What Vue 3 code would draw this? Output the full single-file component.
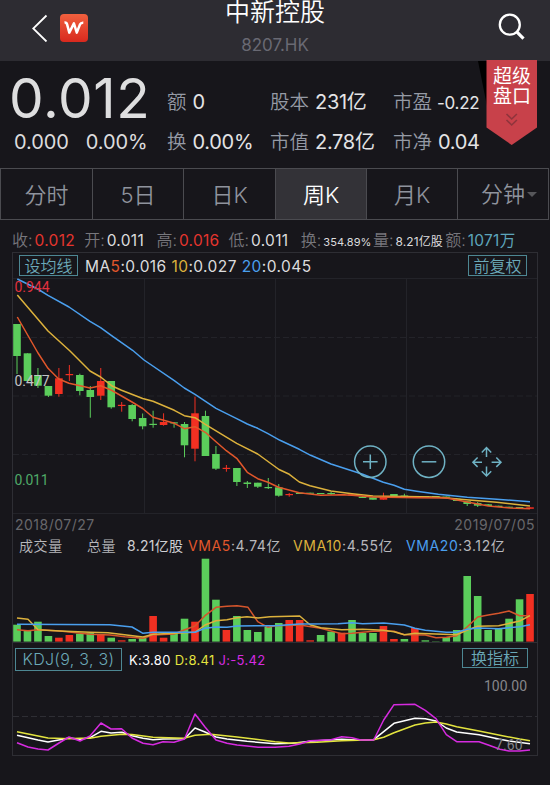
<!-- StockDetail.vue -->
<template>
  <div class="page">
    <header class="header">
      <div class="header-left">
        <svg class="back" viewBox="0 0 16 28" width="16" height="28">
          <path d="M14.5 1.5 L1.2 14.5 L14.5 27.5" fill="none" stroke="#fff" stroke-width="1.8" />
        </svg>
        <div class="logo">
          <svg viewBox="0 0 28 28" width="28" height="28">
            <path d="M4.5 8.6 Q6.6 8.4 7.1 10.4 L9.3 18.6 L13.9 9.4 L16.8 18.6 L19.9 10.6 Q20.8 8.5 23.3 8.7"
              fill="none" stroke="#fff" stroke-width="2.5" stroke-linejoin="round" />
          </svg>
        </div>
      </div>
      <div class="title">
        <h1>中新控股</h1>
        <p>8207.HK</p>
      </div>
      <svg class="search" viewBox="0 0 28 28" width="28" height="28">
        <circle cx="11.8" cy="11.7" r="10" fill="none" stroke="#fff" stroke-width="2.3" />
        <path d="M18.8 18.9 L25.5 25.6" stroke="#fff" stroke-width="3.2" />
      </svg>
    </header>

    <section class="quote">
      <div class="price">
        <div class="price-now">0.012</div>
        <div class="price-change"><span>0.000</span><span>0.00%</span></div>
      </div>
      <dl class="stats">
        <div v-for="s in stats" :key="s.label" class="stat">
          <dt>{{ s.label }}</dt>
          <dd :class="{ small: s.small }">{{ s.value }}</dd>
        </div>
      </dl>
      <div class="ribbon">
        <svg class="ribbon-bg" viewBox="0 0 60 86" width="60" height="86">
          <path d="M0 1 H9 V46 Z" fill="#000" />
          <path d="M8.5 0 H59 V67.5 L33.7 85 L8.5 67.5 Z" fill="#c8414a" />
          <path d="M28.5 54 L33.7 59 L38.9 54 M28.5 60 L33.7 65 L38.9 60" fill="none" stroke="#8f343c" stroke-width="1.6" />
        </svg>
        <span class="ribbon-text">超级<br />盘口</span>
      </div>
    </section>

    <nav class="tabs">
      <a v-for="t in tabs" :key="t" class="tab" :class="{ active: t === '周K', more: t === '分钟' }">{{ t }}</a>
    </nav>

    <div class="info">
      <div v-for="i in info" :key="i.label" class="info-item">
        <span class="info-label">{{ i.label }}:</span>
        <span :class="i.type">{{ i.value }}</span>
      </div>
    </div>

    <main class="chart">
      <div class="ma-row">
        <button class="btn">设均线</button>
        <span class="ma">MA<i class="c5">5</i>:0.016 <i class="c10">10</i>:0.027 <i class="c20">20</i>:0.045</span>
        <button class="btn btn-right">前复权</button>
      </div>

      <svg class="pane" viewBox="13 278 524 236" width="524" height="236">
        <g stroke="#232329">
          <path d="M13 278.5 H537 M13 513.5 H537 M144.5 278 V513 M275.5 278 V513 M406.5 278 V513" />
          <path d="M13 337.5 H537 M13 396 H537 M13 454.5 H537" stroke-dasharray="6 3" />
        </g>
        <g v-for="(c, i) in candles" :key="i" :fill="c[0] ? up : down">
          <rect :x="cx(i) - 0.5" :y="c[3]" width="1" :height="c[4] - c[3]" />
          <rect :x="cx(i) - 3.8" :y="c[1]" width="7.6" :height="c[2] - c[1]" />
        </g>
        <g class="lines">
          <polyline :points="ma.ma20" stroke="#4a9fee" />
          <polyline :points="ma.ma10" stroke="#dcb13c" />
          <polyline :points="ma.ma5" stroke="#e2572b" />
        </g>
        <g class="axis">
          <text x="14.5" y="292" fill="#e0313f" textLength="35">0.944</text>
          <text x="14.5" y="385.5" fill="#c4c4c6" textLength="35">0.477</text>
          <text x="14.5" y="484.5" fill="#4fa968" textLength="34">0.011</text>
        </g>
        <g fill="none" stroke="#6fb2c4" stroke-width="1.5">
          <circle cx="370.3" cy="461.8" r="15.7" />
          <path d="M363 461.8 H377.6 M370.3 454.5 V469.1" />
          <circle cx="429" cy="461.8" r="15.7" />
          <path d="M421.7 461.8 H436.3" />
          <path d="M486.5 457 V447.8 M481.8 452.4 L486.5 447.6 L491.2 452.4" />
          <path d="M486.5 466.5 V475.7 M481.8 471.2 L486.5 476 L491.2 471.2" />
          <path d="M482 462.2 H473 M477.6 457.5 L472.9 462.2 L477.6 466.9" />
          <path d="M491.6 462.2 H501 M496.3 457.5 L501 462.2 L496.3 466.9" />
        </g>
      </svg>

      <div class="dates"><span>2018/07/27</span><span>2019/07/05</span></div>

      <div class="vol-row">
        <span class="v1">成交量</span>
        <span class="v2">总量</span>
        <span class="v3">8.21亿股</span>
        <span class="v4"><i class="c5">VMA5</i>:4.74亿</span>
        <span class="v5"><i class="c10">VMA10</i>:4.55亿</span>
        <span class="v6"><i class="c20">VMA20</i>:3.12亿</span>
      </div>

      <svg class="pane" viewBox="13 557 524 86" width="524" height="86">
        <path d="M13 642.5 H537" stroke="#2e2e34" />
        <rect v-for="(v, i) in volumes" :key="i" :x="cx(i) - 3.8" :y="v[1]" width="7.6" :height="641.6 - v[1]" :fill="v[0] ? up : down" />
        <g class="lines">
          <polyline :points="vma.ma5" stroke="#d5552c" />
          <polyline :points="vma.ma10" stroke="#dcb13c" />
          <polyline :points="vma.ma20" stroke="#4a9fee" />
        </g>
      </svg>

      <div class="kdj-row">
        <button class="btn btn-kdj">KDJ(9, 3, 3)</button>
        <span class="kdj"><i class="k">K:3.80</i> <i class="d">D:8.41</i> <i class="j">J:-5.42</i></span>
        <button class="btn btn-switch">换指标</button>
      </div>

      <svg class="pane" viewBox="13 673 524 82" width="524" height="82">
        <path d="M13 716.5 H537" stroke="#2e2e34" stroke-dasharray="6 3" />
        <g class="lines">
          <polyline :points="kdj.k" stroke="#fff" />
          <polyline :points="kdj.d" stroke="#e3e43f" />
          <polyline :points="kdj.j" stroke="#d62be0" />
        </g>
        <g class="axis" fill="#86868a">
          <text x="484" y="691" textLength="43">100.00</text>
          <text x="495" y="750" textLength="27.5">7.60</text>
        </g>
      </svg>
    </main>
  </div>
</template>

<script setup>
const up = '#f23022';
const down = '#5bcd5b';

const tabs = ['分时', '5日', '日K', '周K', '月K', '分钟'];

const stats = [
  { label: '额', value: '0' },
  { label: '股本', value: '231亿' },
  { label: '市盈', value: '-0.22', small: true },
  { label: '换', value: '0.00%' },
  { label: '市值', value: '2.78亿' },
  { label: '市净', value: '0.04' },
];

const info = [
  { label: '收', value: '0.012', type: 'red' },
  { label: '开', value: '0.011', type: 'white' },
  { label: '高', value: '0.016', type: 'red' },
  { label: '低', value: '0.011', type: 'white' },
  { label: '换', value: '354.89%', type: 'tiny' },
  { label: '量', value: '8.21亿股', type: 'tiny wide' },
  { label: '额', value: '1071万', type: 'blue' },
];

const cx = (i) => 17 + i * 10.47;

// [up, body top, body bottom, wick top, wick bottom]
const candles = [
  [0, 324, 356, 324, 374], [0, 353.3, 381, 353.3, 381], [0, 375, 385.7, 368, 388], [0, 386, 395.7, 386, 397],
  [1, 378.3, 394, 368, 396.7], [1, 374, 375.2, 365, 381], [0, 375, 391, 373.7, 395.3], [0, 390, 397, 386, 417.7],
  [1, 381, 395.7, 368, 400], [0, 381, 407.3, 381, 408.7], [1, 404.8, 406, 402, 411.7], [0, 405, 419, 404, 421.3],
  [0, 418, 426.3, 413.5, 429.3], [0, 423.8, 425, 410.7, 427.7], [1, 422, 425, 413.3, 425.7], [0, 422.3, 423.5, 422, 427.7],
  [0, 424, 445.3, 422, 457.3], [1, 413.3, 448.7, 396.7, 461.3], [0, 416, 456, 410.7, 456], [0, 454, 468.7, 446, 470],
  [1, 467.8, 469, 465, 471.7], [0, 468, 482, 468, 486], [0, 482.5, 484, 481, 488], [0, 482.7, 486.7, 482.7, 488],
  [0, 487, 488.2, 478, 489], [0, 487.3, 495.7, 484, 496.7], [1, 494, 495.2, 493, 496.7], [0, 492.7, 494, 492.7, 494],
  [0, 492.7, 493.7, 492.7, 493.7], [0, 493, 494, 493, 494], [0, 493, 494, 491.7, 495], [1, 494, 495, 494, 495],
  [1, 494.3, 495.3, 494, 495.3], [0, 496.7, 498, 496, 498], [0, 497.3, 499.7, 497, 499.7], [1, 497, 499.7, 492.7, 499.7],
  [0, 494, 496, 494, 496], [0, 495.5, 496.7, 493.7, 497], [0, 496, 497, 496, 497], [0, 496, 497, 496, 497],
  [0, 496, 497, 496, 497], [0, 496.5, 497.5, 496.5, 497.5], [0, 498.7, 501, 498, 501], [0, 501.3, 504, 501.3, 506],
  [0, 503, 505.7, 502, 507], [0, 504.3, 506, 504, 506], [0, 505.7, 507, 505.7, 507], [0, 506.7, 507.7, 506.7, 507.7],
  [0, 507, 508, 507, 508], [1, 507.3, 508.8, 507.3, 508.8],
];

// [up, bar top]
const volumes = [
  [0, 624.7], [0, 630.7], [0, 621.7], [0, 636], [1, 637.7], [1, 635], [0, 633.7], [0, 632.7], [1, 634], [0, 637.7],
  [1, 640.3], [0, 639], [0, 638], [1, 616], [1, 637.7], [0, 633.3], [0, 618.7], [1, 621.7], [0, 558.7], [0, 599.7],
  [1, 630], [0, 616], [0, 630], [0, 632], [0, 627], [0, 623], [1, 620], [1, 620], [1, 640.3], [0, 635],
  [0, 631.7], [1, 632.7], [0, 620], [0, 633], [0, 633], [1, 626], [1, 639], [0, 639], [1, 628], [0, 640.3],
  [0, 641.3], [0, 637], [0, 630], [0, 576], [0, 596], [0, 630], [0, 629], [0, 618.7], [0, 599.3], [1, 594],
];

const ma = {
  ma5: '17.3,317 38,353 48,368.3 58.7,379 69,383.3 90,388 100.6,385.7 111,390 121.6,396 132,402 142.7,408.5 153,417.3 163.7,420.3 174.3,423.3 184.3,428.7 195,426.7 205.3,432.3 216,441.7 226.3,450.7 236.7,458.3 247.3,472.3 257.7,478.7 268,482.3 278.5,487.3 299.3,492.7 320.7,495.3 341.7,494.7 352,495.3 373,497 416.7,497.7 446.7,498 467.3,502 488.3,506 510,508 530,508.7',
  ma10: '17.3,295 48,331 70,351 90,371 100.6,377 111.6,385.7 121.5,390.3 142.7,398.5 153,401.3 174.3,410.3 184.3,415.7 195,417.7 205.3,424.3 236.7,443.3 257.7,454 279,469.5 289.3,474.3 299.3,482 310,485.7 331,491 352,493.7 373,496 436.7,497 460,499.3 496.7,502.3 530,506',
  ma20: '17.3,279 37.7,289 48,295.3 69,307 90,321.3 100.6,327.7 111.6,335.7 132.6,350.3 144,360 174.3,380.7 184.3,388 195,394.3 216,408.3 236.7,418.7 247.3,424 257.7,428.3 268,433.7 280,440.3 299.3,449.3 310.7,455.3 331,464 362.7,474.3 383.3,482.3 394,485.3 404.3,489.3 416.7,491.3 438.3,494.3 467.3,497.3 496.7,499.3 530,501.7',
};

const vma = {
  ma5: '17,629.7 28,630.7 38,629.7 60,631 90,634.3 110,635 125,636.7 143,638.3 153,635 174,634 184,630 195,626 205,615.7 216,607.3 227,606.3 237,605.7 248,607.3 257.7,621.7 268,627.3 275,625.7 299.7,625 320.7,628.3 341.7,633.7 352,633.3 373,631.3 394,631.3 404.3,634.7 425.3,635 436,637.7 446.3,637.3 456.7,635.7 467.3,626.7 477.7,617 488.3,615 498.7,613.3 509,611 519.7,615.7 530,615.7',
  ma10: '17,618 28,619.3 38,629.7 60,631 90,632.3 108,632.7 143,637 153,634.3 174,633.3 195,632.3 205,625 216,620.7 227,619.7 237,617.7 247,616.7 258,618 270,616.7 299.7,616 310,624.7 320.7,627.7 341.7,629.7 362.7,629.3 383.7,630.3 394,631.7 404.3,634.7 415,633.3 456.7,634.7 467.3,630 477.7,626.3 498.7,625.7 519.7,621 530,615.7',
  ma20: '17,624.3 110,624.7 132,627 143,633.3 153,632.3 195,632.3 205,628.3 216,627 227,627.3 237,626 275,625.7 299.7,624 338,623.7 352,622.7 362.7,623.7 383.7,623 404.3,625 415,628.3 425.3,630.3 446.3,632.3 456.7,632.3 467.3,629.3 477.7,628 498.7,628.7 519.7,626.7 530,624.7',
};

const kdj = {
  k: '17,735.3 38,740 48,742 69,738 80,739.3 90,737.7 101,731.3 111,733 122,732.3 132,735.7 143,738.3 153,739.7 163,739 184.5,738.7 195,728 205,732 216,737 227,739 247,741.3 275,743.7 292.7,743.3 310,741.3 341.7,739.3 360.7,740.3 373.7,739.7 394,723.3 415,718.3 425.3,718.7 436,721 446.3,728 456.7,732 479,734.7 498.7,739 509,741 530,743.7',
  d: '17,731.7 48,738 69,738.7 80,738.3 90,738.3 101,736.3 122,734.3 132,734.5 153,737.3 184,738.3 195,735.3 211,734.3 237,737 275,741.7 289,743 317,742.3 341.7,740.7 373.7,739.7 383.7,737.3 394,732.7 415,725 425.3,723 436,722 446.3,724 456.7,726.7 479,731 498.7,735 519.7,739 530,740.7',
  j: '17,742.7 28,747 38,749 48,750 59,743 69,737 80,741 90,736 101,723 111,729 121.6,728.7 132,738 143,743.3 153,744.7 163,741.7 174,742.3 184.5,739 195,714 205,727 216,740 227,743.3 237,745 247,746 258,747.3 275,747.3 289,746.3 299.7,744 310,740.7 331,739.7 341.7,736.7 352,737.7 360.7,740 373.7,740 383.7,720 394,704.7 415,704.3 425.3,710.3 436,718.7 446.3,734.7 456.7,741.7 479,741.7 488.3,745 500,749.3 509,751 519.7,751 530,750',
};
</script>

<style>
body {
  background: #17161b;
}
</style>

<style scoped>
.page {
  width: 550px;
  height: 785px;
  overflow: hidden;
  background: #17161b;
  color: #dcdcde;
  font-family: Inter, "Noto Sans CJK SC", sans-serif;
}

i {
  font-style: normal;
}

.header {
  display: flex;
  justify-content: space-between;
  height: 61px;
  background: #2d2c32;
}

.header-left {
  display: flex;
  width: 191px;
  padding: 14px 0 0 32px;
  box-sizing: border-box;
}

.logo {
  width: 28px;
  height: 28px;
  margin-left: 12px;
  border-radius: 4px;
  background: linear-gradient(#f0603e, #d8291e);
}

.title {
  text-align: center;
}

.title h1 {
  margin: 0;
  font-size: 25px;
  font-weight: 350;
  line-height: 25px;
  color: #fff;
}

.title p {
  margin: 10px 0 0;
  font-size: 17px;
  line-height: 20px;
  color: #696973;
}

.search {
  margin: 13px 24px 0 139px;
}

.quote {
  display: flex;
  position: relative;
  height: 107px;
}

.price {
  width: 167px;
}

.price-now {
  height: 69px;
  padding-left: 9px;
  font-size: 55px;
  line-height: 75px;
  letter-spacing: 0.6px;
  color: #dededf;
}

.price-change {
  display: flex;
  gap: 17px;
  padding-left: 14px;
  font-size: 20px;
  line-height: 24px;
  letter-spacing: -0.1px;
}

.stats {
  display: grid;
  grid-template-columns: 103px 123px 100px;
  grid-template-rows: 40px 40px;
  margin: 21px 0 0;
}

.stat {
  display: flex;
  align-items: baseline;
  gap: 6px;
  font-size: 20px;
  line-height: 40px;
  white-space: nowrap;
}

.stat dt {
  font-size: 19.5px;
  font-weight: 350;
  color: #959aa5;
}

.stat dd {
  margin: 0;
  letter-spacing: -0.3px;
  color: #e4e4e6;
}

.stat dd.small {
  margin-left: -1px;
  font-size: 17px;
}

.ribbon {
  position: absolute;
  top: -1px;
  left: 478px;
  width: 60px;
  height: 86px;
}

.ribbon-bg {
  display: block;
}

.ribbon-text {
  position: absolute;
  top: 7px;
  left: 15px;
  font-size: 19px;
  line-height: 20px;
  color: #fff;
}

.tabs {
  display: grid;
  grid-template-columns: 91px 91px 92px 91px 91px 91px;
  height: 52px;
  width: 549px;
  border: 1px solid #4b4b50;
  box-sizing: border-box;
}

.tab {
  height: 50px;
  font-size: 22px;
  font-weight: 350;
  line-height: 52px;
  text-align: center;
  color: #8f939d;
}

.tab + .tab {
  border-left: 1px solid #4b4b50;
}

.tab.active {
  background: #333237;
  color: #fff;
}

.tab.more {
  display: flex;
  align-items: center;
  justify-content: flex-end;
  padding-right: 11px;
}

.tab.more::after {
  content: "";
  margin-left: 2px;
  border: 5.5px solid transparent;
  border-top-color: #56565a;
  border-bottom: 0;
}

.info {
  display: grid;
  grid-template-columns: repeat(7, 72.2px);
  height: 32px;
  padding-left: 12px;
}

.info-item {
  display: flex;
  align-items: baseline;
  gap: 2px;
  font-size: 15.5px;
  line-height: 40px;
  letter-spacing: 0.3px;
  white-space: nowrap;
}

.info-label {
  width: 20.5px;
  font-size: 16px;
  font-weight: 350;
  letter-spacing: 0;
  color: #77777d;
}

.red {
  color: #e5352e;
}

.blue {
  color: #5da5bb;
}

.tiny {
  font-size: 11px;
  letter-spacing: 0.1px;
}

.tiny.wide {
  font-size: 12px;
}

.chart {
  width: 524px;
  margin-left: 12px;
  border: 1px solid #2e2e34;
}

.pane {
  display: block;
}

.lines {
  fill: none;
  stroke-width: 1.5;
  stroke-linejoin: round;
}

.axis {
  font-family: Roboto, sans-serif;
  font-size: 14px;
}

.ma-row {
  display: flex;
  align-items: center;
  height: 25px;
}

.btn {
  height: 21px;
  margin: 0 0 0 6px;
  padding: 0;
  width: 59px;
  border: 1px solid #4d8793;
  background: none;
  font-family: inherit;
  font-size: 16px;
  font-weight: 350;
  line-height: 18px;
  white-space: nowrap;
  color: #6ba9b8;
}

.ma {
  margin-left: 7px;
  padding-top: 1px;
  font-size: 15.5px;
  letter-spacing: 0.43px;
}

.c5 {
  color: #e2572b;
}

.c10 {
  color: #dcb13c;
}

.c20 {
  color: #4a9fee;
}

.btn-right {
  margin: 0 10px 0 auto;
}

.dates {
  display: flex;
  justify-content: space-between;
  padding: 0 2px;
  font-size: 14px;
  line-height: 22px;
  letter-spacing: 0.5px;
  color: #67676b;
}

.vol-row {
  display: grid;
  grid-template-columns: 68px 40px 61px 105px 113px 110px;
  height: 21px;
  padding-left: 6px;
  font-size: 14px;
  line-height: 20px;
  letter-spacing: 0.6px;
  white-space: nowrap;
  color: #b8b8bc;
}

.v1,
.v2 {
  font-weight: 350;
}

.v3 {
  letter-spacing: 0.3px;
  color: #d0d0d3;
}

.kdj-row {
  display: flex;
  align-items: flex-start;
  height: 30px;
  padding-top: 5px;
  box-sizing: border-box;
}

.btn-kdj {
  width: 107px;
  height: 23px;
  margin-left: 2px;
  line-height: 21px;
  letter-spacing: 0.3px;
}

.kdj {
  margin-left: 7px;
  font-size: 13px;
  line-height: 24px;
  letter-spacing: 0.3px;
}

.k {
  color: #fff;
}

.d {
  color: #e3e43f;
}

.j {
  color: #d62be0;
}

.btn-switch {
  width: 66px;
  height: 20px;
  margin: 0 9px 0 auto;
}
</style>
